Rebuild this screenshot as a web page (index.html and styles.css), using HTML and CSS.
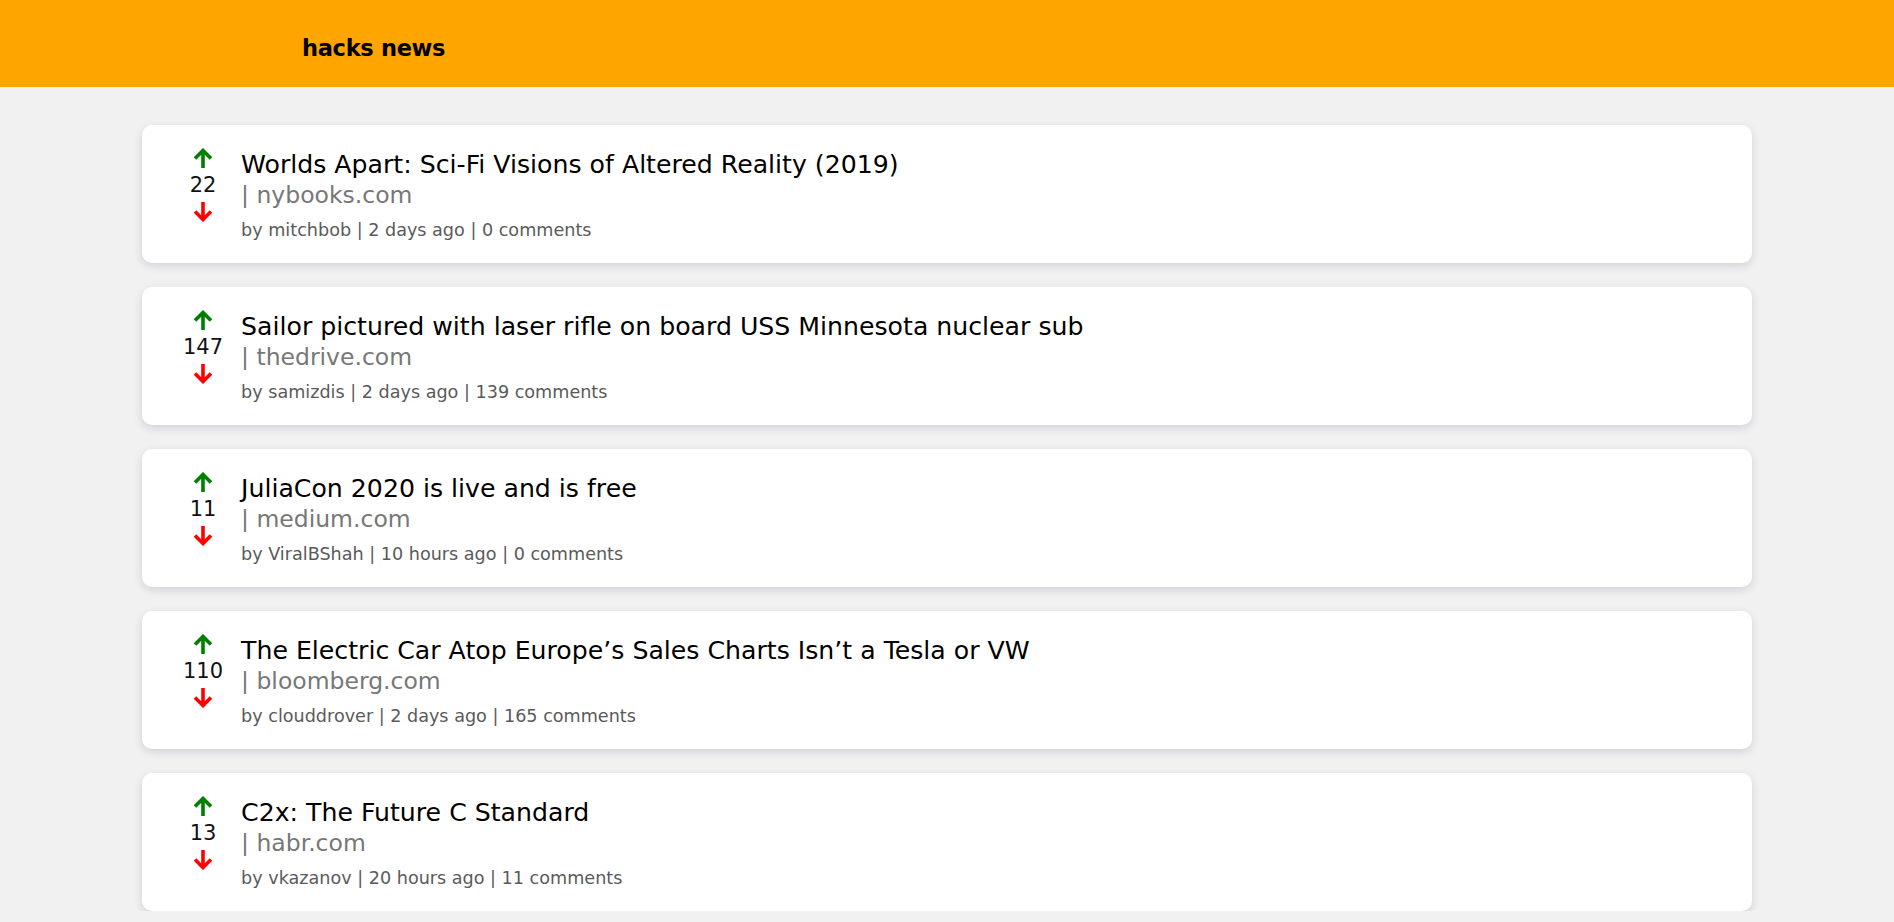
FILE: index.html
```html
<!DOCTYPE html>
<html>
<head>
<meta charset="utf-8">
<title>hacks news</title>
<link rel="stylesheet" href="styles.css">
</head>
<body>
<header class="topbar"><span class="brand">hacks news</span></header>
<main class="list">
  <article class="card">
    <div class="votes">
      <svg class="arrow" viewBox="0 0 22 22"><path d="M11 20V3M3 10.5L11 2.5L19 10.5" stroke="#008000" stroke-width="3.6" fill="none"/></svg>
      <span class="score">22</span>
      <svg class="arrow" viewBox="0 0 22 22"><path d="M11 2V19M3 11.5L11 19.5L19 11.5" stroke="#ff0000" stroke-width="3.6" fill="none"/></svg>
    </div>
    <div class="body">
      <div class="title">Worlds Apart: Sci-Fi Visions of Altered Reality (2019)</div>
      <div class="domain">| nybooks.com</div>
      <div class="meta">by mitchbob | 2 days ago | 0 comments</div>
    </div>
  </article>
  <article class="card">
    <div class="votes">
      <svg class="arrow" viewBox="0 0 22 22"><path d="M11 20V3M3 10.5L11 2.5L19 10.5" stroke="#008000" stroke-width="3.6" fill="none"/></svg>
      <span class="score">147</span>
      <svg class="arrow" viewBox="0 0 22 22"><path d="M11 2V19M3 11.5L11 19.5L19 11.5" stroke="#ff0000" stroke-width="3.6" fill="none"/></svg>
    </div>
    <div class="body">
      <div class="title">Sailor pictured with laser rifle on board USS Minnesota nuclear sub</div>
      <div class="domain">| thedrive.com</div>
      <div class="meta">by samizdis | 2 days ago | 139 comments</div>
    </div>
  </article>
  <article class="card">
    <div class="votes">
      <svg class="arrow" viewBox="0 0 22 22"><path d="M11 20V3M3 10.5L11 2.5L19 10.5" stroke="#008000" stroke-width="3.6" fill="none"/></svg>
      <span class="score">11</span>
      <svg class="arrow" viewBox="0 0 22 22"><path d="M11 2V19M3 11.5L11 19.5L19 11.5" stroke="#ff0000" stroke-width="3.6" fill="none"/></svg>
    </div>
    <div class="body">
      <div class="title">JuliaCon 2020 is live and is free</div>
      <div class="domain">| medium.com</div>
      <div class="meta">by ViralBShah | 10 hours ago | 0 comments</div>
    </div>
  </article>
  <article class="card">
    <div class="votes">
      <svg class="arrow" viewBox="0 0 22 22"><path d="M11 20V3M3 10.5L11 2.5L19 10.5" stroke="#008000" stroke-width="3.6" fill="none"/></svg>
      <span class="score">110</span>
      <svg class="arrow" viewBox="0 0 22 22"><path d="M11 2V19M3 11.5L11 19.5L19 11.5" stroke="#ff0000" stroke-width="3.6" fill="none"/></svg>
    </div>
    <div class="body">
      <div class="title">The Electric Car Atop Europe’s Sales Charts Isn’t a Tesla or VW</div>
      <div class="domain">| bloomberg.com</div>
      <div class="meta">by clouddrover | 2 days ago | 165 comments</div>
    </div>
  </article>
  <article class="card">
    <div class="votes">
      <svg class="arrow" viewBox="0 0 22 22"><path d="M11 20V3M3 10.5L11 2.5L19 10.5" stroke="#008000" stroke-width="3.6" fill="none"/></svg>
      <span class="score">13</span>
      <svg class="arrow" viewBox="0 0 22 22"><path d="M11 2V19M3 11.5L11 19.5L19 11.5" stroke="#ff0000" stroke-width="3.6" fill="none"/></svg>
    </div>
    <div class="body">
      <div class="title">C2x: The Future C Standard</div>
      <div class="domain">| habr.com</div>
      <div class="meta">by vkazanov | 20 hours ago | 11 comments</div>
    </div>
  </article>
</main>
</body>
</html>
```

FILE: styles.css
```css
* { box-sizing: border-box; }
html, body {
  margin: 0;
  padding: 0;
  background: #f1f1f1;
  font-family: "DejaVu Sans", "Noto Sans", sans-serif;
}
.topbar {
  height: 87px;
  background: #ffa500;
  display: flex;
  align-items: center;
  padding-left: 302px;
  padding-top: 9px;
}
.brand {
  font-size: 22.5px;
  font-weight: bold;
  color: #000;
  letter-spacing: -0.3px;
}
.list {
  width: 85%;
  margin: 0 auto;
  padding-top: 38px;
  display: flex;
  flex-direction: column;
  gap: 24px;
}
.card {
  height: 138px;
  background: #fff;
  border-radius: 10px;
  box-shadow: 0 3px 9px rgba(40, 50, 90, 0.16);
  display: flex;
  align-items: flex-start;
  padding: 21px 0 0 41px;
}
.votes {
  width: 40px;
  margin-top: 2px;
  display: flex;
  flex-direction: column;
  align-items: center;
}
.arrow {
  width: 22px;
  height: 22px;
  display: block;
}
.score {
  font-size: 21px;
  line-height: 30px;
  color: #111;
}
.body {
  margin-left: 18px;
  padding-top: 4px;
}
.title {
  font-size: 25.2px;
  line-height: 30px;
  color: #000;
}
.domain {
  font-size: 23.5px;
  line-height: 30px;
  color: #777;
}
.meta {
  margin-top: 8px;
  font-size: 17.6px;
  line-height: 24px;
  color: #5a5a5a;
}
```
